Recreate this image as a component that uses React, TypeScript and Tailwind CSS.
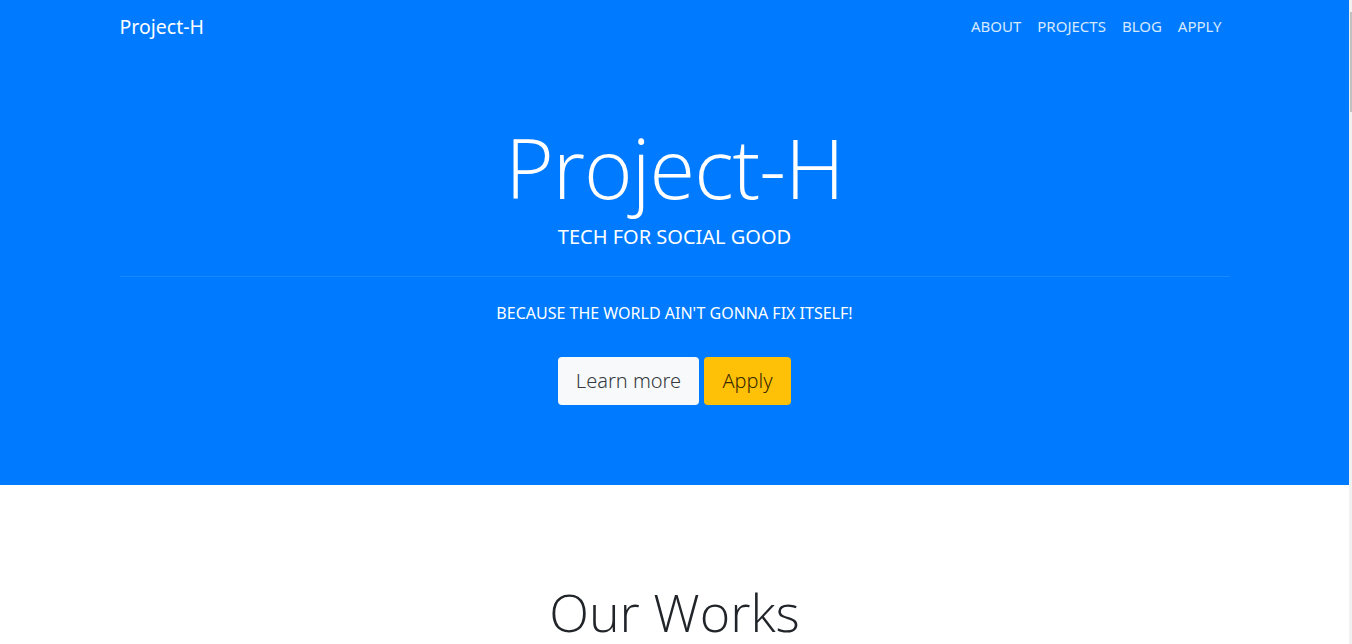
const navLinks = ["ABOUT", "PROJECTS", "BLOG", "APPLY"];

const App = () => {
  return (
    <div className="min-h-screen bg-white font-['Noto_Sans',sans-serif] text-[#212529] pr-[3px]">
      <header className="bg-[#007bff] h-[485px] flex flex-col">
        <nav className="w-[1110px] mx-auto h-[53px] flex items-center justify-between">
          <a className="text-white text-[19.5px] leading-none">Project-H</a>
          <ul className="flex gap-[16px] mr-[8px]">
            {navLinks.map((link) => (
              <li key={link} className="text-[15px] text-[#d6e9ff] leading-none">
                {link}
              </li>
            ))}
          </ul>
        </nav>
        <div className="w-[1110px] mx-auto flex flex-col items-center text-white">
          <h1 className="mt-[66px] font-['Open_Sans',sans-serif] font-light text-[83px] leading-[96px] tracking-[-1px]">
            Project-H
          </h1>
          <p className="text-[20px] leading-[24px] mt-[10px]">TECH FOR SOCIAL GOOD</p>
          <hr className="w-full border-t border-white/10 mt-[27px]" />
          <p className="text-[16px] leading-[20px] mt-[26px]">
            BECAUSE THE WORLD AIN'T GONNA FIX ITSELF!
          </p>
          <div className="flex gap-[5px] mt-[34px]">
            <button className="h-[48px] w-[141px] rounded-[4px] bg-[#f8f9fa] text-[#343a40] text-[20px] font-light">
              Learn more
            </button>
            <button className="h-[48px] w-[87px] rounded-[4px] bg-[#ffc107] text-[#3a2a00] text-[20px] font-light">
              Apply
            </button>
          </div>
        </div>
      </header>
      <section className="flex justify-center pt-[94px]">
        <h2 className="font-['Open_Sans',sans-serif] font-light text-[52px] leading-[66px] text-[#212529]">
          Our Works
        </h2>
      </section>
      <div className="fixed top-0 right-0 w-[3px] h-screen bg-[#f1f1f1] flex flex-col">
        <div className="mt-[12px] h-[100px] w-[2px] ml-[1px] bg-[#c1c1c1]" />
      </div>
    </div>
  );
};

export default App;
